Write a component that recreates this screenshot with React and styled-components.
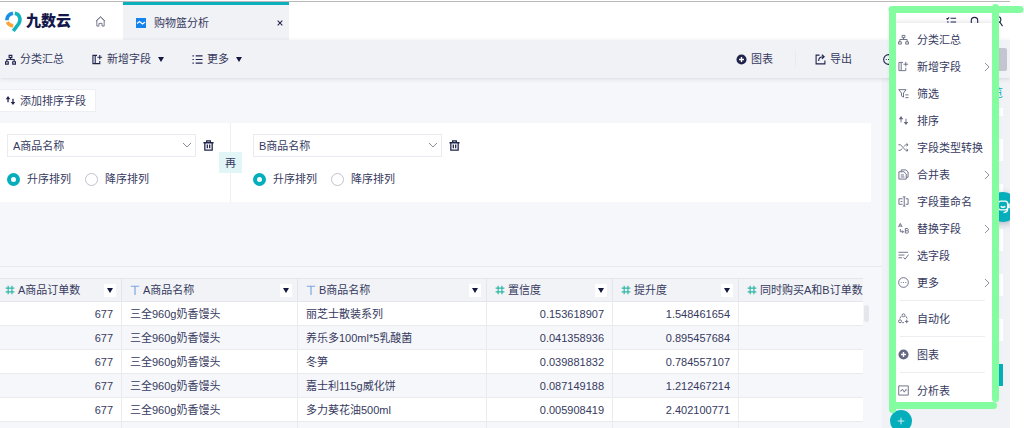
import styled, { createGlobalStyle } from "styled-components";

const GlobalStyle = createGlobalStyle`
  * {
    box-sizing: border-box;
  }
  body {
    margin: 0;
    background: #fff;
    color: #363a60;
    font-family: "Liberation Sans", "Noto Sans CJK SC", sans-serif;
    font-size: 11px;
    line-height: 16px;
  }
  button, select, input {
    margin: 0;
    padding: 0;
    border: 0;
    background: none;
    color: inherit;
    font: inherit;
  }
  svg {
    flex: none;
  }
`;
const Page = styled.div`
  position: relative;
  height: 100vh;
  padding: 1px 14px 0 0;
  overflow: hidden;
`;
const Shell = styled.div`
  position: relative;
  height: 100%;
  display: flex;
  flex-direction: column;
  border-top: 1px solid #b9b9b9;
  background: #f6f7fa;
  overflow: hidden;
`;
const Header = styled.header`
  flex: none;
  height: 38px;
  display: flex;
  background: #fff;
`;
const Brand = styled.a`
  width: 95px;
  padding-left: 5px;
  display: flex;
  align-items: center;
  gap: 4px;
  color: #14174a;
  font-size: 15px;
  font-weight: 900;
  text-decoration: none;
`;
const HomeLink = styled.a`
  width: 28px;
  display: flex;
  align-items: center;
  color: #6b6e88;
`;
const Tab = styled.div`
  width: 166px;
  padding: 0 4px 0 13px;
  display: flex;
  align-items: center;
  gap: 8px;
  border-top: 3px solid #0bb0bc;
  background: #f1f2f6;
`;
const TabTitle = styled.span`
  flex: 1;
`;
const IconButton = styled.button`
  flex: none;
  width: ${(props) => props.$size || 12}px;
  height: ${(props) => props.$size || 12}px;
  display: flex;
  align-items: center;
  justify-content: center;
  color: #20244c;
`;
const HeaderActions = styled.div`
  margin-left: auto;
  padding-right: 7px;
  display: flex;
  align-items: center;
  gap: 11px;
`;
const Toolbar = styled.div`
  flex: none;
  position: relative;
  height: 38px;
  padding: 0 3px 0 5px;
  display: flex;
  align-items: center;
  gap: 28px;
  background: #f1f2f6;
  box-shadow: 0 1px 4px rgba(40, 45, 80, 0.14);
`;
const ToolButton = styled.button`
  display: flex;
  align-items: center;
  gap: 4px;
  white-space: nowrap;
  svg {
    color: #20244c;
  }
`;
const ToolbarEnd = styled.div`
  margin-left: auto;
  display: flex;
  align-items: center;
  gap: 30px;
`;
const ExportGroup = styled.div`
  margin-left: -8px;
  padding-left: 19px;
  border-left: 1px solid #e8e9ee;
`;
const SaveButton = styled.button`
  width: 83px;
  height: 23px;
  border-radius: 2px;
  background: #c5c5d2;
`;
const Caret = styled.span`
  margin-left: 3px;
  border: 3px solid transparent;
  border-top: 5px solid #15183f;
  border-bottom: 0;
`;
const Content = styled.div`
  flex: 1;
  min-height: 0;
  display: grid;
  grid-template-columns: 1fr 128px;
`;
const Workspace = styled.main`
  min-width: 0;
  padding-top: 11px;
`;
const AddSortButton = styled.button`
  height: 23px;
  padding: 0 9px 0 5px;
  display: flex;
  align-items: center;
  gap: 4px;
  border: 1px solid #eeeff3;
  border-left: 0;
  background: #fff;
  svg {
    color: #20244c;
  }
`;
const SortPanel = styled.section`
  margin: 11px 11px 0 0;
  height: 79px;
  display: flex;
  background: #fff;
`;
const SortGroup = styled.fieldset`
  margin: 0;
  padding: 11px 0 0 7px;
  border: 0;
  width: 218px;
`;
const SortField = styled.div`
  display: flex;
  align-items: center;
  gap: 6px;
`;
const SelectBox = styled.label`
  position: relative;
  width: 189px;
  height: 23px;
  svg {
    position: absolute;
    top: 8px;
    right: 4px;
    color: #8b8d9d;
    pointer-events: none;
  }
`;
const FieldSelect = styled.select`
  width: 100%;
  height: 100%;
  padding-left: 5px;
  appearance: none;
  border: 1px solid #eaebf0;
  background: #fff;
`;
const RadioRow = styled.div`
  margin-top: 14px;
  display: flex;
  gap: 14px;
`;
const RadioLabel = styled.label`
  display: flex;
  align-items: center;
  gap: 7px;
`;
const Radio = styled.input`
  appearance: none;
  width: 13px;
  height: 13px;
  border: 1px solid #c1c2ce;
  border-radius: 50%;
  background: #fff;
  &:checked {
    border: 4px solid #04aebb;
  }
`;
const Joiner = styled.div`
  width: 28px;
  display: flex;
  align-items: center;
  background: linear-gradient(to right, transparent 12px, #eeeff3 12px, #eeeff3 13px, transparent 13px);
`;
const JoinLabel = styled.span`
  width: 23px;
  height: 21px;
  margin-left: 1px;
  display: flex;
  align-items: center;
  justify-content: center;
  background: #e2f5f7;
`;
const TableArea = styled.section`
  margin-top: 64px;
  padding-top: 11px;
  display: grid;
  grid-template-columns: minmax(0, 1fr) 18px;
  gap: 1px;
  border-top: 1px solid #e9eaee;
`;
const DataTable = styled.table`
  width: 100%;
  table-layout: fixed;
  border-collapse: separate;
  border-spacing: 0;
`;
const HeadCell = styled.th`
  width: ${(props) => (props.$width ? `${props.$width}px` : "auto")};
  height: 24px;
  padding: 0 5px 0 ${(props) => props.$pad || 8}px;
  border: solid #e5e6eb;
  border-width: 1px 1px 1px 0;
  background: #f1f3f6;
  font-weight: 400;
  text-align: left;
  &:last-child {
    padding-right: 0;
    border-right: 0;
  }
`;
const HeadContent = styled.div`
  display: flex;
  align-items: center;
  gap: 3px;
  white-space: nowrap;
`;
const FilterButton = styled.button`
  width: 12px;
  height: 13px;
  margin-left: auto;
  display: flex;
  align-items: center;
  justify-content: center;
  background: #fff;
  ${Caret} {
    margin: 0;
  }
`;
const Row = styled.tr`
  background: #fff;
  &:nth-child(even) {
    background: #f6f7fa;
  }
`;
const Cell = styled.td`
  height: 24px;
  padding: 0 8px;
  border-bottom: 1px solid #eaebef;
  border-right: 1px solid #eaebef;
  text-align: ${(props) => (props.$numeric ? "right" : "left")};
  white-space: nowrap;
  &:last-child {
    border-right: 0;
  }
`;
const ScrollTrack = styled.div`
  padding-top: 27px;
`;
const ScrollThumb = styled.div`
  width: 5px;
  height: 17px;
  border-radius: 3px;
  background: #e5e6eb;
`;
const Sidebar = styled.aside`
  padding: 7px 7px 0 32px;
  display: flex;
  flex-direction: column;
  background: #f1f2f6;
`;
const SidebarLink = styled.a`
  align-self: flex-end;
  color: #0aabb8;
  text-decoration: none;
`;
const SidebarBox = styled.div`
  flex: none;
  height: ${(props) => props.$height || 22}px;
  margin-top: ${(props) => props.$gap || 23}px;
  background: ${(props) => (props.$active ? "#04aebb" : "#fff")};
`;
const ChatButton = styled.button`
  position: absolute;
  top: 190px;
  right: -8px;
  width: 30px;
  height: 30px;
  display: flex;
  align-items: center;
  justify-content: center;
  border-radius: 50%;
  background: #04aebb;
  box-shadow: 0 2px 7px rgba(25, 35, 75, 0.3);
  color: #fff;
`;
const AddStepButton = styled.button`
  position: absolute;
  top: 408px;
  right: 98px;
  width: 22px;
  height: 22px;
  display: flex;
  align-items: center;
  justify-content: center;
  border-radius: 50%;
  background: #04aebb;
  color: #fff;
`;
const Menu = styled.nav`
  position: absolute;
  top: 23px;
  right: 29px;
  width: 103px;
  padding: 3px 0 0;
  background: #fff;
  box-shadow: 0 0 6px rgba(30, 35, 70, 0.16);
`;
const MenuItem = styled.button`
  width: 100%;
  height: 27px;
  padding: 0 5px 0 6px;
  display: flex;
  align-items: center;
  gap: 8px;
  white-space: nowrap;
  svg {
    color: #656981;
  }
  svg:last-child:not(:first-child) {
    margin-left: auto;
    color: #8f91a2;
  }
`;
const Separator = styled.hr`
  height: 1px;
  margin: 4px 10px 4px 8px;
  border: 0;
  background: #ededf2;
`;
const Marker = styled.svg`
  position: absolute;
  top: 0;
  right: 0;
  pointer-events: none;
`;

const shapes = {
  group: (
    <>
      <path d="M4.5 1.5h3V4h-3zM6 4v2M2 8.5V6h8v2.5" />
      <path d="M.6 8.5h3V11h-3zM8.4 8.5h3V11h-3z" />
    </>
  ),
  column: <path d="M1 1.5h2.5v9H1zM3.5 10.5h5v-3M3.5 1.5h2M8.5 1v5M6 3.5h5" />,
  filter: <path d="M.8 1.8h8L6 5.5V10L3.8 8.5v-3zM8 7.5h3.5M8 10.5h3.5" />,
  sort: (
    <>
      <path d="M3.3 8V3M8.7 4v5" />
      <path d="M.8 4.5l2.5-3.3 2.5 3.3zM6.2 7.5l2.5 3.3 2.5-3.3z" fill="currentColor" stroke="none" />
    </>
  ),
  shuffle: <path d="M.5 3h2.3l5.5 6h2.5M.5 9h2.3L4.5 7M6.5 5l1.8-2h2.5M9.3 1.5L11 3 9.3 4.5M9.3 7.5L11 9l-1.7 1.5" />,
  merge: <path d="M3.5 3V1h5.2L11 3.2V9H9M1 3h5.5L9 5.5V11H1zM3 6.5h3.5M3 8.7h4" />,
  rename: <path d="M5 3H1v6h4M8.5 3H11v6H8.5M5.2 1h3M6.8 1v10M5.2 11h3M2.8 6h2" />,
  replace: (
    <path d="M.5 4.5l2-4 2 4M1.2 3.3h2.6M2.5 6.5v3H6M4.5 8L6 9.5 4.5 11M8 6v5h2c2 0 2-2.5.3-2.5C11.8 8.5 11.5 6 10 6zM8 8.5h2" />
  ),
  pick: <path d="M.5 2.5H11M.5 5.5h6.5M.5 8.5h4M6 8l1.8 2 3.7-5" />,
  more: (
    <>
      <circle cx="6" cy="6" r="5.3" />
      <path d="M3 6h1M5.5 6h1M8 6h1" />
    </>
  ),
  automate: (
    <>
      <circle cx="6" cy="2.5" r="1.6" />
      <circle cx="2.2" cy="9" r="1.6" />
      <path d="M3.5 3.5L2 6M8.5 3.5L10 6M4.5 10.5h2M9.5 7.2v4M7.5 9.2h4" />
    </>
  ),
  analysis: <path d="M.8 1h10.4v10H.8zM2.5 6.5h1l1.4-2 2 3.3 1.8-3 1 1.2" />,
  list: <path d="M.5 2H2M.5 6H2M.5 10H2M4 2h7.5M4 6h7.5M4 10h7.5" />,
  tasks: <path d="M.5 2.5l1 1 2-2M1 6.5h2M1 10h2M5 2.5h6M5 6.5h6M5 10h6" />,
  bell: <path d="M1 9.5h10M2.5 9.5V5a3.5 3.5 0 017 0v4.5M5 11.3h2" />,
  user: (
    <>
      <circle cx="6.5" cy="4" r="3.2" />
      <path d="M8.5 6.5l3 4.5M2 11c0-2 1-3 2.5-4" />
    </>
  ),
  export: <path d="M5 1.2H1.2v9.6h9.6V7M4 7.5c0-3 1.8-4.5 5-4.5M7.5.8L10 3 7.5 5.3" />,
  home: <path d="M2 11V4.8L6 1l4 3.8V11H7.7V8H4.3v3zM1 5.7L6 1l5 4.7" />,
  trash: <path d="M.5 3h11M4 3V1h4v2M2 3v8h8V3M4.7 5v4M7.3 5v4" />,
  close: <path d="M2.5 2.5l7 7M9.5 2.5l-7 7" />,
  plus: <path d="M6 1v10M1 6h10" />,
  number: <path d="M3.8 1v10M8.3 1v10M.8 3.7h10.4M.8 8.3h10.4" />,
  text: <path d="M1 1.5h10M6 1.5V12" />,
  headset: (
    <>
      <path d="M2 3.5Q2 1 4 1h4q2 0 2 2.5v3q0 2-2 2H4q-2 0-2-2zM2 3.5H.8v3H2M10 3.5h1.2v3H10M10 8q0 2.5-3.5 2.8" />
      <path d="M4 5.5q2 1.5 4 0" />
    </>
  ),
};

function Icon({ name, size = 11, color = "currentColor", weight = 1.2 }) {
  return (
    <svg width={size} height={size} viewBox="0 0 12 12" fill="none" stroke={color} strokeWidth={weight} aria-hidden="true">
      {shapes[name]}
    </svg>
  );
}

function PlusDisc() {
  return (
    <svg width="11" height="11" viewBox="0 0 12 12" aria-hidden="true">
      <circle cx="6" cy="6" r="5.5" fill="currentColor" />
      <path d="M6 3.3v5.4M3.3 6h5.4" stroke="#fff" strokeWidth="1.5" />
    </svg>
  );
}

function Chevron({ right }) {
  return (
    <svg
      width={right ? 6 : 10}
      height={right ? 10 : 6}
      viewBox={right ? "0 0 6 10" : "0 0 10 6"}
      fill="none"
      stroke="currentColor"
      aria-hidden="true"
    >
      <path d={right ? "M1 1l4 4-4 4" : "M1 1l4 4 4-4"} />
    </svg>
  );
}

function Logo() {
  return (
    <svg width="17" height="21" viewBox="0 0 17 21" fill="none" strokeWidth="3.6" aria-hidden="true">
      <path d="M1.9 9.2Q2 3.5 8 2.3" stroke="#1b8fe8" />
      <path d="M2.3 11q1.7 3.6 6 3.7" stroke="#fda63c" />
      <path d="M9.8 2.3c5.7 1 6 6.7 4 10.2L8.3 20" stroke="#13b4bd" />
    </svg>
  );
}

const menuItems = [
  { icon: "group", label: "分类汇总" },
  { icon: "column", label: "新增字段", sub: true },
  { icon: "filter", label: "筛选" },
  { icon: "sort", label: "排序" },
  { icon: "shuffle", label: "字段类型转换" },
  { icon: "merge", label: "合并表", sub: true },
  { icon: "rename", label: "字段重命名" },
  { icon: "replace", label: "替换字段", sub: true },
  { icon: "pick", label: "选字段" },
  { icon: "more", label: "更多", sub: true },
];

const columns = [
  { type: "number", label: "A商品订单数", width: 122, pad: 5 },
  { type: "text", label: "A商品名称", width: 176, pad: 8 },
  { type: "text", label: "B商品名称", width: 189, pad: 8 },
  { type: "number", label: "置信度", width: 126, pad: 8 },
  { type: "number", label: "提升度", width: 126, pad: 8 },
  { type: "number", label: "同时购买A和B订单数", pad: 8 },
];

const rows = [
  ["677", "三全960g奶香馒头", "丽芝士散装系列", "0.153618907", "1.548461654"],
  ["677", "三全960g奶香馒头", "养乐多100ml*5乳酸菌", "0.041358936", "0.895457684"],
  ["677", "三全960g奶香馒头", "冬笋", "0.039881832", "0.784557107"],
  ["677", "三全960g奶香馒头", "嘉士利115g威化饼", "0.087149188", "1.212467214"],
  ["677", "三全960g奶香馒头", "多力葵花油500ml", "0.005908419", "2.402100771"],
  ["", "", "", "", ""],
];

function SortRule({ id, field }) {
  return (
    <SortGroup>
      <SortField>
        <SelectBox htmlFor={`field-${id}`}>
          <FieldSelect id={`field-${id}`} aria-label={field} defaultValue={field}>
            <option>{field}</option>
          </FieldSelect>
          <Chevron />
        </SelectBox>
        <IconButton aria-label="删除">
          <Icon name="trash" weight={1.4} />
        </IconButton>
      </SortField>
      <RadioRow>
        <RadioLabel>
          <Radio type="radio" name={`order-${id}`} defaultChecked />
          升序排列
        </RadioLabel>
        <RadioLabel>
          <Radio type="radio" name={`order-${id}`} />
          降序排列
        </RadioLabel>
      </RadioRow>
    </SortGroup>
  );
}

function ResultTable() {
  return (
    <DataTable>
      <thead>
        <tr>
          {columns.map(({ type, label, width, pad }) => (
            <HeadCell key={label} $width={width} $pad={pad}>
              <HeadContent>
                <Icon name={type} size={10} color={type === "number" ? "#2fb5a5" : "#7ba4df"} weight={1.4} />
                {label}
                {width && (
                  <FilterButton aria-label={`筛选${label}`}>
                    <Caret />
                  </FilterButton>
                )}
              </HeadContent>
            </HeadCell>
          ))}
        </tr>
      </thead>
      <tbody>
        {rows.map((row, index) => (
          <Row key={index}>
            <Cell $numeric>{row[0]}</Cell>
            <Cell>{row[1]}</Cell>
            <Cell>{row[2]}</Cell>
            <Cell $numeric>{row[3]}</Cell>
            <Cell $numeric>{row[4]}</Cell>
            <Cell />
          </Row>
        ))}
      </tbody>
    </DataTable>
  );
}

function ActionMenu() {
  return (
    <Menu>
      {menuItems.map(({ icon, label, sub }) => (
        <MenuItem key={label}>
          <Icon name={icon} weight={1} />
          {label}
          {sub && <Chevron right />}
        </MenuItem>
      ))}
      <Separator />
      <MenuItem>
        <Icon name="automate" weight={1} />
        自动化
      </MenuItem>
      <Separator />
      <MenuItem>
        <PlusDisc />
        图表
      </MenuItem>
      <Separator />
      <MenuItem>
        <Icon name="analysis" weight={1} />
        分析表
      </MenuItem>
    </Menu>
  );
}

function App() {
  return (
    <Page>
      <GlobalStyle />
      <Shell>
        <Header>
          <Brand href="#">
            <Logo />
            九数云
          </Brand>
          <HomeLink href="#" aria-label="首页">
            <Icon name="home" weight={1} />
          </HomeLink>
          <Tab>
            <svg width="10" height="10" viewBox="0 0 10 10" aria-hidden="true">
              <path fill="#1583ee" d="M0 0h10v10H0z" />
              <path d="M1 5.5l2.5-2 3 2.5L9 4" fill="none" stroke="#fff" strokeWidth="1.3" />
            </svg>
            <TabTitle>购物篮分析</TabTitle>
            <IconButton $size={10} aria-label="关闭">
              <Icon name="close" size={8} weight={1.6} />
            </IconButton>
          </Tab>
          <HeaderActions>
            <IconButton aria-label="任务">
              <Icon name="tasks" />
            </IconButton>
            <IconButton aria-label="通知">
              <Icon name="bell" />
            </IconButton>
            <IconButton aria-label="账户">
              <Icon name="user" />
            </IconButton>
          </HeaderActions>
        </Header>
        <Toolbar>
          <ToolButton>
            <Icon name="group" />
            分类汇总
          </ToolButton>
          <ToolButton>
            <Icon name="column" />
            新增字段
            <Caret />
          </ToolButton>
          <ToolButton>
            <Icon name="list" />
            更多
            <Caret />
          </ToolButton>
          <ToolbarEnd>
            <ToolButton>
              <PlusDisc />
              图表
            </ToolButton>
            <ExportGroup>
              <ToolButton>
                <Icon name="export" />
                导出
              </ToolButton>
            </ExportGroup>
            <IconButton aria-label="更多">
              <Icon name="more" />
            </IconButton>
            <SaveButton aria-label="保存" />
          </ToolbarEnd>
        </Toolbar>
        <Content>
          <Workspace>
            <AddSortButton>
              <Icon name="sort" weight={1.4} />
              添加排序字段
            </AddSortButton>
            <SortPanel>
              <SortRule id="a" field="A商品名称" />
              <Joiner>
                <JoinLabel>再</JoinLabel>
              </Joiner>
              <SortRule id="b" field="B商品名称" />
            </SortPanel>
            <TableArea>
              <ResultTable />
              <ScrollTrack>
                <ScrollThumb />
              </ScrollTrack>
            </TableArea>
          </Workspace>
          <Sidebar>
            <SidebarLink href="#">预览</SidebarLink>
            <SidebarBox $height={8} $gap={7} />
            <SidebarBox />
            <SidebarBox />
            <SidebarBox />
            <SidebarBox />
            <SidebarBox />
            <SidebarBox $active />
          </Sidebar>
        </Content>
        <ChatButton aria-label="客服">
          <Icon name="headset" size={14} />
        </ChatButton>
        <AddStepButton aria-label="添加">
          <Icon name="plus" size={8} />
        </AddStepButton>
      </Shell>
      <ActionMenu />
      <Marker
        width="140"
        height="420"
        viewBox="0 0 140 420"
        fill="none"
        stroke="#83fd9f"
        strokeWidth="7"
        strokeLinecap="round"
        aria-hidden="true"
      >
        <path d="M8 9.5h128M8.5 9.5v400M111.5 7.5v391M8.500 405.500h101" />
      </Marker>
    </Page>
  );
}

export default App;
